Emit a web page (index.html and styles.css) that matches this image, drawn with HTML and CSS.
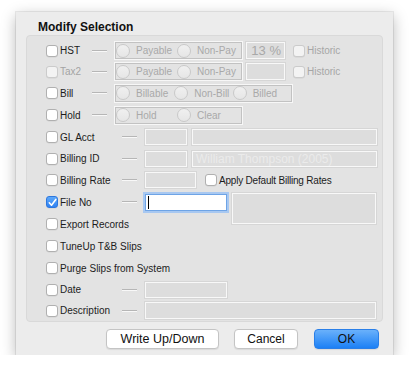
FILE: index.html
```html
<!DOCTYPE html>
<html lang="en">
<head>
    <meta charset="UTF-8">
    <title>Modify Selection</title>
    <link rel="stylesheet" href="styles.css">
</head>
<body>
    <div class="sheet">
        <h1 class="title">Modify Selection</h1>
        <div class="group">
            <div class="row r21">
                <span class="cb"></span><span class="name">HST</span><span class="dash"></span>
                <div class="radios">
                    <span class="opt"><i></i>Payable</span>
                    <span class="opt"><i></i>Non-Pay</span>
                </div>
                <span class="field pct">13 %</span>
                <span class="hist"><span class="cb off"></span>Historic</span>
            </div>
            <div class="row r21">
                <span class="cb off"></span><span class="name dim">Tax2</span><span class="dash"></span>
                <div class="radios">
                    <span class="opt"><i></i>Payable</span>
                    <span class="opt"><i></i>Non-Pay</span>
                </div>
                <span class="field pct"></span>
                <span class="hist"><span class="cb off"></span>Historic</span>
            </div>
            <div class="row">
                <span class="cb"></span><span class="name">Bill</span><span class="dash"></span>
                <div class="radios wide">
                    <span class="opt"><i></i>Billable</span>
                    <span class="opt"><i></i>Non-Bill</span>
                    <span class="opt"><i></i>Billed</span>
                </div>
            </div>
            <div class="row">
                <span class="cb"></span><span class="name">Hold</span><span class="dash"></span>
                <div class="radios">
                    <span class="opt"><i></i>Hold</span>
                    <span class="opt"><i></i>Clear</span>
                </div>
            </div>
            <div class="row">
                <span class="cb"></span><span class="name wide">GL Acct</span><span class="dash"></span>
                <span class="field code"></span>
                <span class="field lookup"></span>
            </div>
            <div class="row r21">
                <span class="cb"></span><span class="name wide">Billing ID</span><span class="dash"></span>
                <span class="field code"></span>
                <span class="field lookup hint">William Thompson (2005)</span>
            </div>
            <div class="row">
                <span class="cb"></span><span class="name wide">Billing Rate</span><span class="dash"></span>
                <span class="field rate"></span>
                <span class="apply"><span class="cb"></span>Apply Default Billing Rates</span>
            </div>
            <div class="row">
                <span class="cb on"><svg width="9" height="9" viewBox="0 0 9 9"><path d="M1.3 4.8 L3.5 7.2 L7.8 1.4" fill="none" stroke="#fff" stroke-width="1.6" stroke-linecap="round" stroke-linejoin="round"/></svg></span><span class="name wide">File No</span><span class="dash"></span>
                <span class="field short focus"><span class="caret"></span></span>
                <span class="field memo"></span>
            </div>
            <div class="row">
                <span class="cb"></span><span class="name">Export Records</span>
            </div>
            <div class="row">
                <span class="cb"></span><span class="name">TuneUp T&amp;B Slips</span>
            </div>
            <div class="row">
                <span class="cb"></span><span class="name">Purge Slips from System</span>
            </div>
            <div class="row r21">
                <span class="cb"></span><span class="name wide">Date</span><span class="dash"></span>
                <span class="field short"></span>
            </div>
            <div class="row r21">
                <span class="cb"></span><span class="name wide">Description</span><span class="dash"></span>
                <span class="field long"></span>
            </div>
        </div>
        <div class="actions">
            <button class="btn write">Write Up/Down</button>
            <button class="btn cancel">Cancel</button>
            <button class="btn ok">OK</button>
        </div>
    </div>
</body>
</html>
```

FILE: styles.css
```css
* {
    box-sizing: border-box;
}
body {
    margin: 0;
    background-color: #fff;
    font-family: "Liberation Sans", Arial, sans-serif;
    font-size: 10px;
    color: #1c1c1c;
}
.sheet {
    margin: 12px 0 0 16px;
    width: 377px;
    height: 343px;
    padding: 0 10px;
    background-color: #ececec;
    box-shadow: 0 4px 14px rgba(0, 0, 0, 0.28), 0 0 0 1px rgba(0, 0, 0, 0.07);
}
.title {
    margin: 0;
    height: 23px;
    padding: 8px 0 0 12px;
    font-size: 12px;
    line-height: 14px;
    font-weight: bold;
    color: #111;
}
.group {
    height: 287px;
    padding: 4px 0 0 19px;
    background-color: #e3e3e3;
    border: 1px solid #d9d9d9;
    border-radius: 4px;
}
.row {
    display: flex;
    align-items: center;
    height: 22px;
}
.row.r21 {
    height: 21px;
}
.cb {
    flex: none;
    width: 12px;
    height: 12px;
    margin-right: 2px;
    background-color: #fff;
    border: 1px solid #b0b0b0;
    border-radius: 3px;
    box-shadow: 0 0.5px 0.5px rgba(0, 0, 0, 0.08);
}
.cb.off {
    background-color: #f3f3f3;
    border-color: #cbcbcb;
}
.cb.on {
    display: flex;
    align-items: center;
    justify-content: center;
    background: linear-gradient(#5ea9fa, #2f82f3);
    border-color: #2d77de;
}
.name {
    width: 32px;
    white-space: nowrap;
}
.name.wide {
    width: 62px;
}
.name.dim {
    color: #a3a3a3;
}
.dash {
    flex: none;
    width: 15px;
    height: 2px;
    margin-right: 8px;
    border-top: 1px solid #b6b6b6;
    border-bottom: 1px solid #f8f8f8;
}
.radios {
    display: flex;
    align-items: center;
    width: 127px;
    height: 17px;
    border: 1px solid #c2c2c2;
    box-shadow: 0 0 0 1px #f7f7f7;
}
.radios.wide {
    width: 177px;
}
.opt {
    display: flex;
    align-items: center;
    width: 61px;
    color: #a9a9a9;
}
.opt i {
    width: 14px;
    height: 14px;
    margin-right: 6px;
    background: linear-gradient(#f0f0f0, #e6e6e6);
    border: 1px solid #c9c9c9;
    border-radius: 50%;
}
.field {
    flex: none;
    height: 17px;
    background-color: #dddddd;
    border: 1px solid #f8f8f8;
    box-shadow: 0 0 0 1px #d6d6d6;
}
.pct {
    width: 39px;
    margin-left: 4px;
    padding-right: 3px;
    font-size: 13px;
    line-height: 15px;
    text-align: right;
    color: #a8a8a8;
}
.hist {
    display: flex;
    align-items: center;
    margin-left: 8px;
    color: #a6a6a6;
}
.code {
    width: 42px;
    height: 16px;
}
.lookup {
    width: 185px;
    height: 16px;
    margin-left: 5px;
}
.hint {
    padding-left: 3px;
    font-size: 12px;
    line-height: 14px;
    color: #ebebeb;
    white-space: nowrap;
    overflow: hidden;
}
.rate {
    width: 51px;
    height: 16px;
}
.apply {
    display: flex;
    align-items: center;
    margin-left: 9px;
    white-space: nowrap;
    letter-spacing: -0.2px;
}
.short {
    width: 82px;
    height: 16px;
}
.focus {
    height: 17px;
    display: flex;
    align-items: center;
    background-color: #fff;
    border: 1px solid #6ea4e6;
    box-shadow: 0 0 0 2px #a8c8f1;
}
.caret {
    width: 1px;
    height: 13px;
    margin-left: 2px;
    background-color: #000;
}
.memo {
    align-self: flex-start;
    width: 144px;
    height: 31px;
    margin: 2px 0 0 5px;
}
.long {
    width: 231px;
    height: 17px;
}
.actions {
    display: flex;
    justify-content: flex-end;
    padding: 7px 4px 0 0;
}
.btn {
    height: 20px;
    padding: 0;
    font-family: "Liberation Sans", Arial, sans-serif;
    font-size: 12px;
    color: #111;
    background-color: #fff;
    border: 1px solid #c4c4c4;
    border-radius: 4px;
    box-shadow: 0 1px 1px rgba(0, 0, 0, 0.08);
}
.write {
    width: 113px;
    font-size: 12.5px;
}
.cancel {
    width: 64px;
    margin-left: 15px;
}
.ok {
    width: 65px;
    margin-left: 16px;
    background: linear-gradient(#6ab1fb, #1c80f5);
    border-color: #2a7fe8;
}
```
